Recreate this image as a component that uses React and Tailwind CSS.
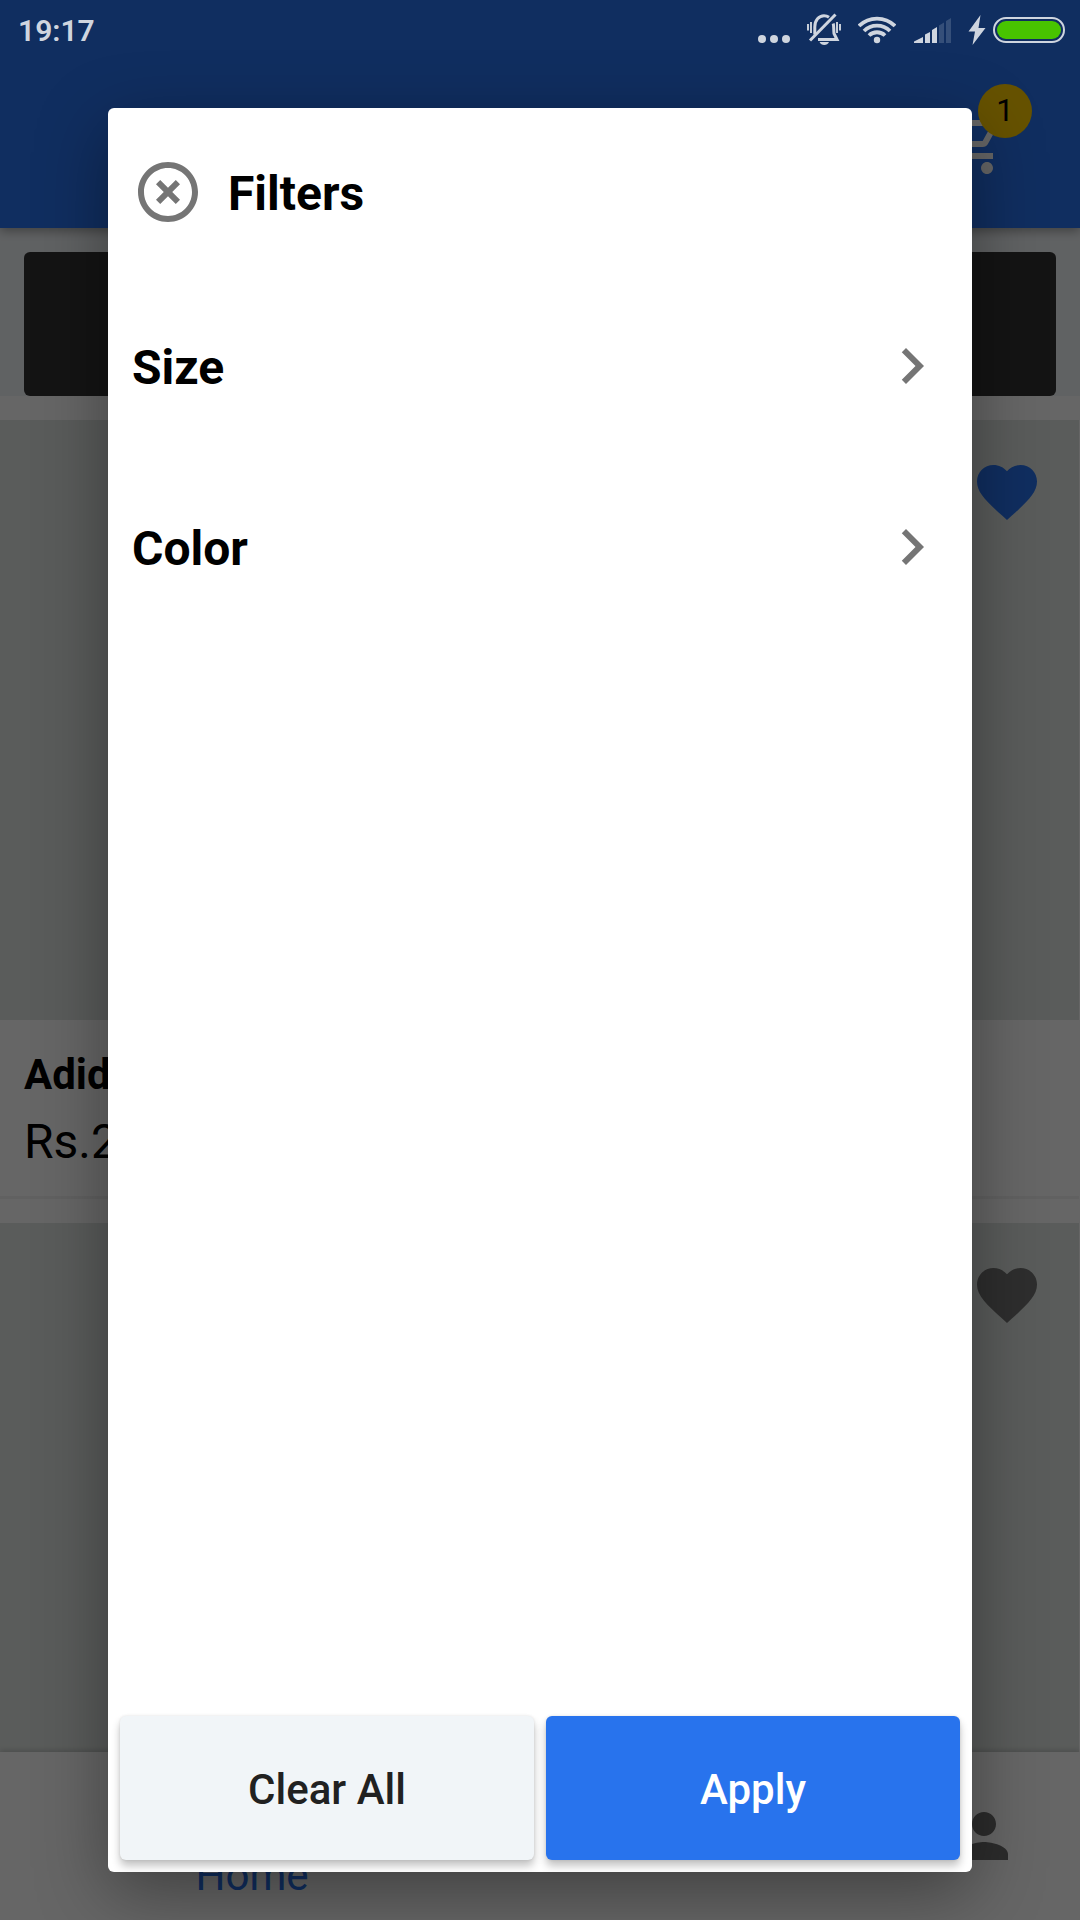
const ICONS = {
  cart: "M15.550 13c.75 0 1.41-.41 1.75-1.03l3.58-6.49A1 1 0 0 0 20.010 4H5.21l-.94-2H1v2h2l3.6 7.590-1.350 2.440C4.520 15.370 5.480 17 7 17h12v-2H7l1.100-2h7.450zM6.160 6h12.150l-2.760 5H8.530L6.160 6zM7 18c-1.1 0-1.99.9-1.99 2S5.9 22 7 22s2-.9 2-2-.9-2-2-2zm10 0c-1.1 0-1.99.9-1.99 2s.89 2 1.99 2 2-.9 2-2-.9-2-2-2z",
  heart: "M12 21.35l-1.45-1.32C5.4 15.36 2 12.28 2 8.5 2 5.42 4.42 3 7.5 3c1.74 0 3.41.81 4.5 2.09C13.09 3.81 14.76 3 16.5 3 19.58 3 22 5.42 22 8.5c0 3.78-3.4 6.86-8.55 11.54L12 21.35z",
  person: "M12 12c2.21 0 4-1.79 4-4s-1.79-4-4-4-4 1.79-4 4 1.79 4 4 4zm0 2c-2.67 0-8 1.34-8 4v2h16v-2c0-2.66-5.33-4-8-4z",
  chevron: "M8.59 16.59L13.17 12 8.59 7.41 10 6l6 6-6 6z",
  close: "M12 20c-4.41 0-8-3.59-8-8s3.59-8 8-8 8 3.59 8 8-3.59 8-8 8m0-18C6.47 2 2 6.47 2 12s4.47 10 10 10 10-4.47 10-10S17.53 2 12 2m2.59 6L12 10.59 9.41 8 8 9.41 10.59 12 8 14.59 9.41 16 12 13.41 14.59 16 16 14.59 13.41 12 16 9.41z",
};

function Icon({ name, className }) {
  return (
    <svg viewBox="0 0 24 24" className={`size-[72px] shrink-0 ${className}`} fill="currentColor">
      <path d={ICONS[name]} />
    </svg>
  );
}

function StatusBar() {
  return (
    <div className="absolute inset-x-0 top-0 flex h-[60px] items-start justify-between pr-[15px] pl-[18px] text-[#cfd5df]">
      <span className="text-[30px] leading-[61px] font-semibold">19:17</span>
      <div className="flex h-[60px]">
        <svg viewBox="18 0 32 60" className="mr-[17px] h-[60px] w-8" fill="currentColor">
          <circle cx="22" cy="39" r="4" />
          <circle cx="34" cy="39" r="4" />
          <circle cx="46" cy="39" r="4" />
        </svg>
        <svg viewBox="67 0 34 60" className="mr-[17px] h-[60px] w-[34px]" fill="none" stroke="currentColor">
          <path d="M74.800 34.500V27C74.800 20 79 15.700 84 15.700C86 15.700 87.500 16.200 89 17.300M93.200 23.500C94 26 93.500 29 94 33.500L97 39.500H78" strokeWidth="3" />
          <path d="M95.500 14.500L70 40.500" strokeWidth="3" />
          <path d="M68 24v6.500M71 22v11M97 22v11M100 24v6.500" strokeWidth="1.900" />
          <path d="M79.500 42h9.500c-1.500 4-8 4-9.500 0z" fill="currentColor" stroke="none" />
        </svg>
        <svg viewBox="118 0 38 60" className="mr-[18px] h-[60px] w-[38px]" fill="none" stroke="currentColor" strokeWidth="3.800">
          <path d="M119 26a25.500 25.500 0 0 1 36 0M124 31a18.500 18.500 0 0 1 26 0M129 35.500a11.500 11.500 0 0 1 16 0" />
          <circle cx="137" cy="40" r="3.200" fill="currentColor" stroke="none" />
        </svg>
        <svg viewBox="174 0 37 60" className="mr-[17px] h-[60px] w-[37px]" fill="currentColor">
          <path d="M174 43v-1.500l9-4.500v6zM185 43v-8.500l5-2.500v11zM192 43V30l5-3v16z" />
          <path d="M199 43V25.500l5-3V43zM206 43V21l5-3v25z" opacity="0.200" />
        </svg>
        <svg viewBox="228 0 18 60" className="mr-[7px] h-[60px] w-[18px]" fill="currentColor">
          <path d="M240.500 15l-12 16.500h6.500l-2.500 13.500 13-17h-7z" />
        </svg>
        <svg viewBox="253 0 72 60" className="h-[60px] w-[72px]">
          <rect x="254" y="18" width="70" height="24" rx="12" fill="none" stroke="currentColor" strokeWidth="2" />
          <rect x="257" y="21" width="64" height="18" rx="9" fill="#48c400" />
        </svg>
      </div>
    </div>
  );
}

function ProductCard({ heart, name, price }) {
  return (
    <div className="mb-6 w-[1079px] border-b-[3px] border-[#f2f2f2] bg-white">
      <div className="flex h-[600px] justify-end bg-[#e1e6e3] pt-9 pr-9">
        <Icon name="heart" className={heart} />
      </div>
      <div className="h-[176px] px-6 pt-[27px]">
        <p className="text-[42px] leading-[56px] font-bold">{name}</p>
        <p className="mt-[7px] text-5xl leading-[64px]">{price}</p>
      </div>
    </div>
  );
}

function Catalogue() {
  return (
    <div className="flex h-full flex-col bg-white text-black">
      <header className="relative z-10 flex h-[228px] shrink-0 justify-end bg-[#2874f0] pt-[108px] pr-[72px] shadow-[0_3px_10px_rgba(0,0,0,0.35)]">
        <Icon name="cart" className="text-white" />
        <span className="absolute top-[84px] right-[48px] flex size-[54px] items-center justify-center rounded-full bg-[#ffcc00] pt-px text-[31px]">
          1
        </span>
      </header>
      <div className="h-[168px] shrink-0 bg-[#f1f5f8] px-6 pt-6">
        <div className="h-[144px] rounded-md bg-[#333333]" />
      </div>
      <main className="min-h-0 flex-1 overflow-hidden pt-6">
        <ProductCard heart="text-[#2874f0]" name="Adidas" price="Rs.2" />
        <ProductCard heart="text-[#737373]" />
      </main>
      <nav className="relative flex h-[168px] shrink-0 bg-white shadow-[0_-1px_6px_rgba(0,0,0,0.2)]">
        <div className="flex w-[504px] items-end justify-center pb-[19px] text-[42px] leading-[50px] text-[#2874f0]">
          Home
        </div>
        <div className="w-48" />
        <div className="w-48" />
        <div className="flex w-48 justify-center pt-12">
          <Icon name="person" className="text-[#6e6e6e]" />
        </div>
      </nav>
    </div>
  );
}

function FilterRow({ label }) {
  return (
    <div className="flex h-[181px] items-center justify-between pr-6 pb-px pl-6">
      <span className="pt-[3px] text-5xl leading-[72px] font-bold">{label}</span>
      <Icon name="chevron" className="text-[#757575]" />
    </div>
  );
}

function FiltersDialog() {
  return (
    <div className="absolute top-[108px] left-[108px] flex h-[1764px] w-[864px] flex-col rounded-md bg-white text-black shadow-[0_20px_70px_rgba(0,0,0,0.38)]">
      <div className="flex h-[168px] items-center gap-6 pl-6">
        <Icon name="close" className="text-[#757575]" />
        <h1 className="pt-[3px] text-5xl leading-[72px] font-bold">Filters</h1>
      </div>
      <FilterRow label="Size" />
      <FilterRow label="Color" />
      <div className="mt-auto flex gap-3 p-3 text-[42px] font-medium">
        <button className="h-[144px] flex-1 rounded-md bg-[#f1f5f8] pt-[3px] text-[#212121] shadow-[0_6px_8px_rgba(0,0,0,0.24),0_0_3px_rgba(0,0,0,0.1)]">
          Clear All
        </button>
        <button className="h-[144px] flex-1 rounded-md bg-[#2873ed] pt-[3px] text-white shadow-[0_6px_8px_rgba(0,0,0,0.24),0_0_3px_rgba(0,0,0,0.1)]">
          Apply
        </button>
      </div>
    </div>
  );
}

export default function App() {
  return (
    <div className="relative h-[1920px] w-[1080px] overflow-hidden font-[Roboto,sans-serif]">
      <Catalogue />
      <div className="absolute inset-0 z-20 bg-black/60">
        <FiltersDialog />
        <StatusBar />
      </div>
    </div>
  );
}
